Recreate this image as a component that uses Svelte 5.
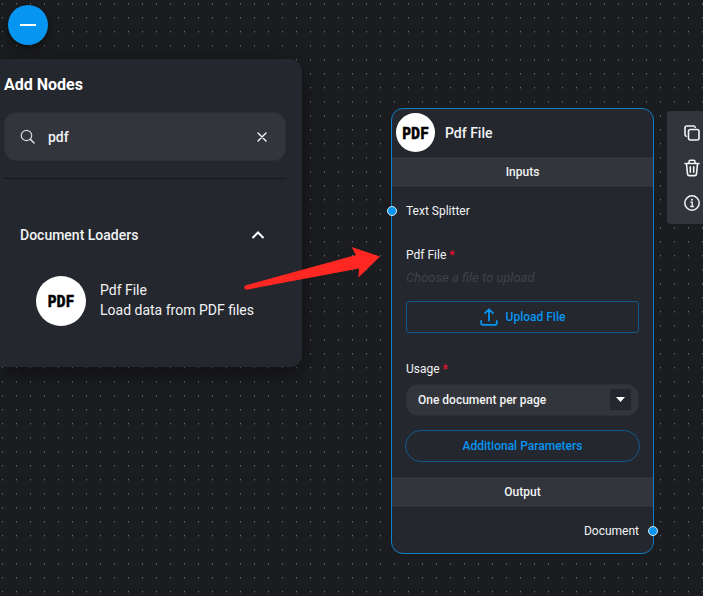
<script>
  let query = $state('pdf');
  let usage = $state('One document per page');
  const usages = ['One document per page', 'One document per file'];
</script>

{#snippet pdfLogo(size, textSize)}
  <svg class="logo" width={size} height={size} viewBox="0 0 {size} {size}" role="img" aria-label="PDF">
    <circle cx={size / 2} cy={size / 2} r={size / 2} fill="#fff" />
    <text x={size / 2} y={size / 2 + 6} text-anchor="middle" font-size={textSize} class="logo-text">PDF</text>
  </svg>
{/snippet}

<main class="canvas">
  <aside class="palette">
    <button class="fab" aria-label="Close node list">
      <svg width="20" height="20" viewBox="0 0 20 20"><path d="M2 10H18" stroke="#fff" stroke-width="2" /></svg>
    </button>

    <section class="panel">
      <h1>Add Nodes</h1>
      <label class="search">
        <svg width="16" height="16" viewBox="0 0 16 16" fill="none" stroke="#d5d7da" stroke-width="1.2" stroke-linecap="round">
          <circle cx="6.5" cy="6.5" r="5.2" /><path d="M10.4 10.4L14 14" stroke-width="1.6" />
        </svg>
        <input type="text" aria-label="Search nodes" bind:value={query} />
        <button class="clear" aria-label="Clear search" onclick={() => (query = '')}>
          <svg width="12" height="12" viewBox="0 0 12 12" stroke="#fff" stroke-width="1.3" stroke-linecap="round"><path d="M2 2L10 10M10 2L2 10" /></svg>
        </button>
      </label>
      <hr />
      <button class="category">
        <span>Document Loaders</span>
        <svg width="14" height="10" viewBox="0 0 14 10" fill="none" stroke="#fff" stroke-width="2"><path d="M1.5 8L7 2.5L12.5 8" /></svg>
      </button>
      <div class="item">
        {@render pdfLogo(50, 15)}
        <div class="item-text">
          <div>Pdf File</div>
          <div>Load data from PDF files</div>
        </div>
      </div>
    </section>
  </aside>

  <article class="node">
    <header>
      {@render pdfLogo(39, 15)}
      <h2>Pdf File</h2>
    </header>
    <h3>Inputs</h3>
    <div class="port in"><i class="handle"></i>Text Splitter</div>
    <div class="fields">
      <div class="label">Pdf File <b>*</b></div>
      <em>Choose a file to upload</em>
      <button class="upload">
        <svg width="18" height="18" viewBox="0 0 18 18" fill="none" stroke="#0695f1" stroke-width="1.8" stroke-linecap="round" stroke-linejoin="round">
          <path d="M9 12.5V1.5M5 5.2L9 1.3L13 5.2M1.2 13V15Q1.2 16.8 3 16.8H15Q16.8 16.8 16.8 15V13" />
        </svg>
        Upload File
      </button>
      <label class="label" for="usage">Usage <b>*</b></label>
      <div class="select">
        <select id="usage" bind:value={usage}>
          {#each usages as option}<option>{option}</option>{/each}
        </select>
        <span class="caret"><svg width="9" height="5" viewBox="0 0 9 5"><path d="M0 0H9L4.5 5Z" fill="#fff" /></svg></span>
      </div>
      <button class="params">Additional Parameters</button>
    </div>
    <h3>Output</h3>
    <div class="port out">Document<i class="handle"></i></div>
  </article>

  <nav class="tools" aria-label="Node actions">
    <button aria-label="Duplicate">
      <svg width="16" height="16" viewBox="0 0 16 16" fill="none" stroke="#f4f4f5" stroke-width="1.6" stroke-linejoin="round" stroke-linecap="round">
        <rect x="4.5" y="4.5" width="10.5" height="10.5" rx="2" />
        <path d="M2.2 11.2Q1 10.8 1 9.5V3Q1 1 3 1H9.5Q10.8 1 11.2 2.2" />
      </svg>
    </button>
    <button aria-label="Delete">
      <svg width="16" height="18" viewBox="0 0 16 18" fill="none" stroke="#f4f4f5" stroke-width="1.6" stroke-linejoin="round" stroke-linecap="round">
        <path d="M1 4.5H15M5 4.3V2.8Q5 1.3 6.5 1.3H9.5Q11 1.3 11 2.8V4.3M2.5 4.8L3.5 14.8Q3.7 16.6 5.3 16.6H10.7Q12.3 16.6 12.5 14.8L13.5 4.8M6.3 7.8V13.3M9.7 7.8V13.3" />
      </svg>
    </button>
    <button aria-label="Info">
      <svg width="16" height="16" viewBox="0 0 16 16" fill="none" stroke="#f4f4f5" stroke-width="1.5">
        <circle cx="8" cy="8" r="7.2" /><path d="M6.4 7.2H8.2V11.4M6.2 11.5H10" stroke-width="1.3" /><circle cx="8" cy="4.7" r="1" fill="#f4f4f5" stroke="none" />
      </svg>
    </button>
  </nav>

  <svg class="arrow" width="138" height="48" viewBox="0 0 138 48" aria-hidden="true">
    <path d="M2 39.2L112 9L107.500 1L136 10.500L114.500 31.500L115 22.500L4 43.500Q0.500 44 0.300 42Q0 39.800 2 39.200Z" fill="#ff2722" />
  </svg>
</main>

<style>
  :global(body) {
    margin: 0;
  }
  * {
    box-sizing: border-box;
  }
  .canvas {
    position: relative;
    min-height: 100vh;
    overflow: hidden;
    background-color: #1b1c1f;
    background-image: conic-gradient(from 270deg at 1px 1px, #6c6d70 90deg, transparent 0),
      conic-gradient(from 270deg at 1px 1px, #38393c 90deg, transparent 0);
    background-size: 14px 14px;
    background-position: 2px 3px, 2px 4px;
    color: #f2f3f4;
    font: 14px/20px Roboto, 'Liberation Sans', sans-serif;
  }
  button,
  input,
  select {
    font: inherit;
    color: inherit;
    border: 0;
    padding: 0;
    margin: 0;
    background: none;
  }
  button {
    cursor: pointer;
  }
  svg {
    display: block;
    flex: none;
  }
  .logo-text {
    font-family: 'DejaVu Sans Mono', monospace;
    font-weight: 700;
    fill: #000;
    stroke: #000;
    stroke-width: 0.5px;
    stroke-linejoin: round;
  }
  .palette {
    width: 302px;
    padding-top: 5px;
  }
  .fab {
    display: grid;
    place-items: center;
    width: 40px;
    height: 40px;
    margin-left: 8px;
    border-radius: 50%;
    background: #0695f1;
    box-shadow: 0 3px 8px rgba(0, 0, 0, 0.5);
  }
  .panel {
    margin-top: 14px;
    padding: 16px 16px 41px 4px;
    border-radius: 0 12px 12px 0;
    background: #24272e;
    box-shadow: 0 6px 20px rgba(0, 0, 0, 0.45);
  }
  h1 {
    margin: 0 0 17px;
    font-size: 16px;
    line-height: 20px;
    font-weight: 700;
    color: #fff;
  }
  .search {
    display: flex;
    align-items: center;
    gap: 12px;
    height: 49px;
    padding: 0 17px 0 15px;
    border: 1px solid #2c2f35;
    border-radius: 12px;
    background: #32353b;
    font-weight: 500;
  }
  .search input {
    flex: 1;
    min-width: 0;
    outline: 0;
  }
  hr {
    height: 1px;
    margin: 17px 0 0;
    border: 0;
    background: #17181b;
  }
  .category {
    display: flex;
    justify-content: space-between;
    align-items: center;
    width: 100%;
    padding: 46px 21px 31px 16px;
    font-weight: 500;
  }
  .item {
    display: flex;
    align-items: center;
    gap: 14px;
    padding-left: 32px;
  }
  .item-text {
    padding-bottom: 2px;
  }
  .node {
    position: absolute;
    left: 391px;
    top: 108px;
    width: 263px;
    border: 1px solid #0d80ca;
    border-radius: 12px;
    background: #24272e;
    font-size: 12px;
    line-height: 16px;
  }
  header {
    display: flex;
    align-items: center;
    gap: 10px;
    height: 47px;
    padding-left: 4px;
  }
  h2,
  h3 {
    margin: 0;
    font-size: 14px;
    font-weight: 500;
  }
  h3 {
    height: 32px;
    border: 1px solid #1e2024;
    border-width: 1px 0;
    background: #32353b;
    font-size: 12px;
    line-height: 30px;
    text-align: center;
  }
  .port {
    position: relative;
    padding: 15px 14px;
  }
  .port.out {
    padding-bottom: 14px;
    text-align: right;
  }
  .handle {
    position: absolute;
    top: 18px;
    width: 10px;
    height: 10px;
    border: 1px solid #dfe9f1;
    border-radius: 50%;
    background: #0695f1;
  }
  .in .handle {
    left: -5px;
  }
  .out .handle {
    right: -5px;
  }
  .fields {
    display: flex;
    flex-direction: column;
    padding: 13px 14px 14px;
  }
  .label b {
    color: #f0102b;
    font-weight: 500;
  }
  em {
    margin-top: 7px;
    color: #404245;
    font-size: 13px;
  }
  .upload,
  .params {
    display: flex;
    align-items: center;
    justify-content: center;
    gap: 8px;
    height: 32px;
    border: 1px solid #12598a;
    color: #0695f1;
    font-weight: 500;
  }
  .upload {
    margin: 15px 0 28px;
    border-radius: 3px;
  }
  .params {
    margin: 14px -1px 0;
    border-radius: 16px;
  }
  .select {
    position: relative;
    margin-top: 7px;
  }
  select {
    display: block;
    width: 100%;
    height: 32px;
    padding: 0 36px 0 11px;
    border: 1px solid #2c2f35;
    border-radius: 12px;
    background: #32353b;
    font-weight: 500;
    appearance: none;
  }
  .caret {
    position: absolute;
    right: 8px;
    top: 5px;
    display: grid;
    place-items: center;
    width: 21px;
    height: 21px;
    background: #24272e;
    pointer-events: none;
  }
  .tools {
    position: absolute;
    left: 667px;
    top: 111px;
    display: grid;
    width: 50px;
    padding: 4px 0;
    border-radius: 4px;
    background: #32353b;
  }
  .tools button {
    display: grid;
    place-items: center;
    height: 35px;
  }
  .arrow {
    position: absolute;
    left: 244px;
    top: 246px;
  }
</style>
